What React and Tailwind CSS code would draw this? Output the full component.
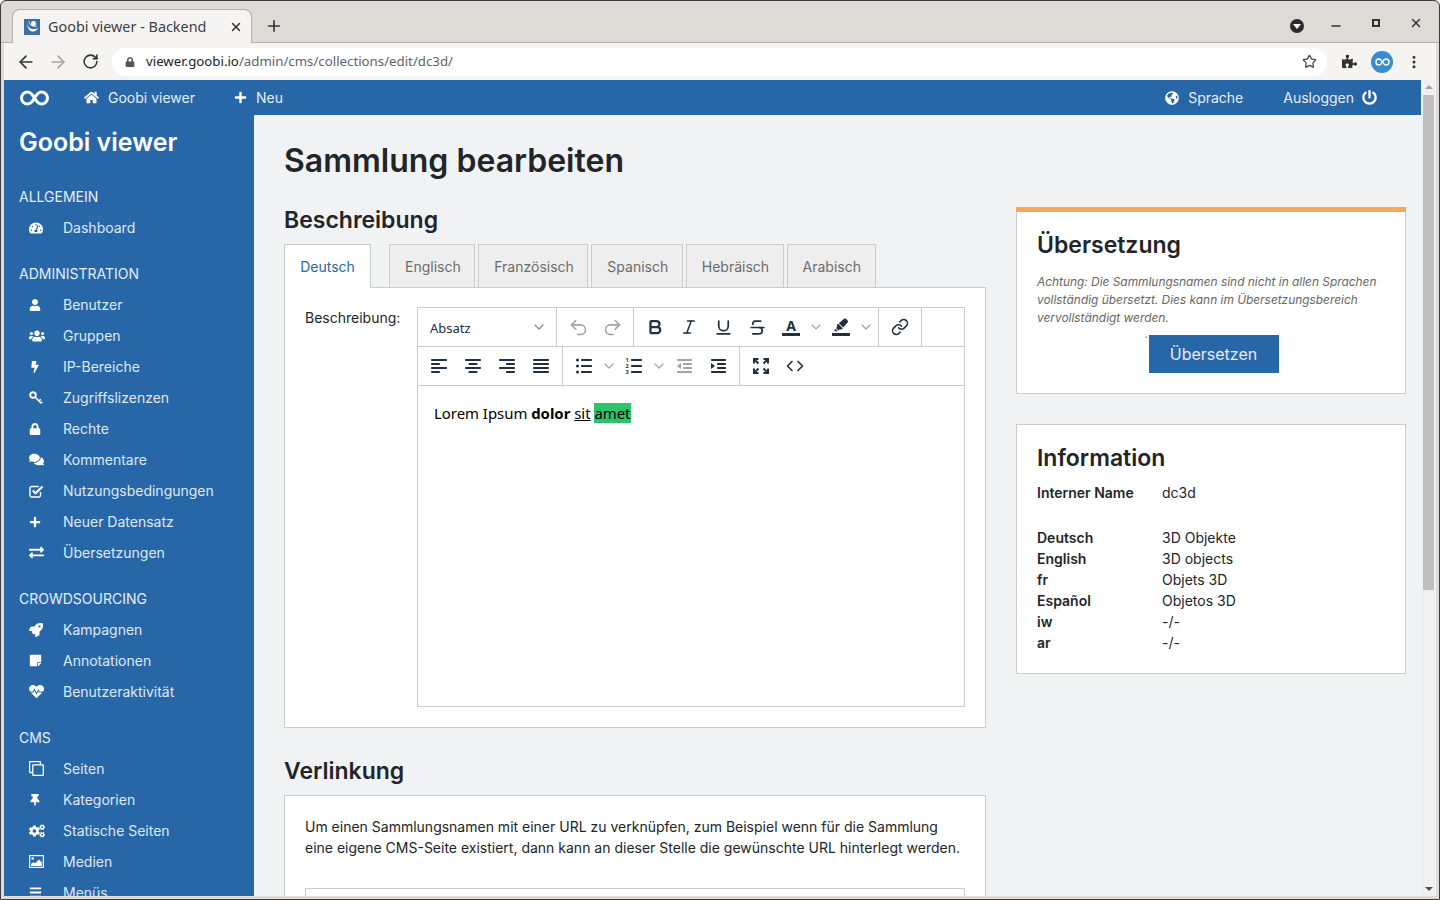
import {
  ArrowLeft, ArrowRight, RotateCw, Star, MoreVertical, X, Plus, Minus, Undo2, Redo2, Bold, Italic,
  Underline, Strikethrough, Link, Code, ChevronDown,
} from "lucide-react";
import {
  FaHome, FaPlus, FaGlobeAmericas, FaPowerOff, FaTachometerAlt, FaUser, FaUsers, FaBolt, FaLock,
  FaComments, FaExchangeAlt, FaRocket, FaStickyNote, FaHeartbeat, FaThumbtack,
  FaCogs, FaBars, FaPuzzlePiece, FaHighlighter,
} from "react-icons/fa";

function KeyIcon() {
  return (
    <svg viewBox="0 0 14 14" fill="none" stroke="currentColor" className="h-[14px] w-[14px]">
      <circle cx="4" cy="4" r="2.800" strokeWidth="1.900" />
      <path d="M6 6l6.500 6.500M10 10l1.800-1.800M12 12l1.200-1.200" strokeWidth="1.600" />
    </svg>
  );
}

function CheckBoxIcon() {
  return (
    <svg viewBox="0 0 15 14" fill="none" stroke="currentColor" className="h-[14px] w-[15px]">
      <path d="M11.500 8v3.200a1.800 1.800 0 0 1-1.800 1.800H2.800A1.800 1.800 0 0 1 1 11.200V4.300a1.800 1.800 0 0 1 1.800-1.800h7" strokeWidth="1.400" />
      <path d="M3.800 6.500l2.700 2.700L13.500 2.500" strokeWidth="2.200" />
    </svg>
  );
}

function PagesIcon() {
  return (
    <svg viewBox="0 0 15 15" fill="none" stroke="currentColor" strokeWidth="1.300" className="h-[15px] w-[15px]">
      <path d="M3.500 11.500H1.200a.6.6 0 0 1-.6-.6V1.200a.6.6 0 0 1 .6-.6h9.600a.6.6 0 0 1 .6.6v2.300" />
      <rect x="3.800" y="3.800" width="10.500" height="10.500" rx="0.600" />
    </svg>
  );
}

function PictureIcon() {
  return (
    <svg viewBox="0 0 15 13" className="h-[13px] w-[15px]">
      <rect x="0.600" y="0.600" width="13.800" height="11.800" fill="none" stroke="currentColor" strokeWidth="1.200" />
      <circle cx="3.700" cy="3.500" r="1.300" fill="currentColor" />
      <path d="M2 11V9l2.500-2 1.500 1.200L10 4.500 13 7.500V11z" fill="currentColor" />
    </svg>
  );
}

const sections = [
  { title: "ALLGEMEIN", items: [["Dashboard", FaTachometerAlt]] },
  {
    title: "ADMINISTRATION",
    items: [
      ["Benutzer", FaUser, 12],
      ["Gruppen", FaUsers, 16],
      ["IP-Bereiche", FaBolt, 12],
      ["Zugriffslizenzen", KeyIcon],
      ["Rechte", FaLock, 12],
      ["Kommentare", FaComments, 15],
      ["Nutzungsbedingungen", CheckBoxIcon],
      ["Neuer Datensatz", FaPlus, 12],
      ["Übersetzungen", FaExchangeAlt, 15],
    ],
  },
  {
    title: "CROWDSOURCING",
    items: [
      ["Kampagnen", FaRocket],
      ["Annotationen", FaStickyNote, 13],
      ["Benutzeraktivität", FaHeartbeat, 15],
    ],
  },
  {
    title: "CMS",
    items: [
      ["Seiten", PagesIcon],
      ["Kategorien", FaThumbtack, 12],
      ["Statische Seiten", FaCogs, 16],
      ["Medien", PictureIcon],
      ["Menüs", FaBars, 13],
    ],
  },
];

const tabs = ["Englisch", "Französisch", "Spanisch", "Hebräisch", "Arabisch"];

const info = [
  ["Deutsch", "3D Objekte"],
  ["English", "3D objects"],
  ["fr", "Objets 3D"],
  ["Español", "Objetos 3D"],
  ["iw", "-/-"],
  ["ar", "-/-"],
];

function InfinityLogo({ className }) {
  return (
    <svg viewBox="0 0 30 16" fill="none" stroke="currentColor" strokeWidth="3" className={className}>
      <path d="M15 8c-2-3.500-4-6-7-6a6 6 0 0 0 0 12c3 0 5-2.500 7-6s4-6 7-6a6 6 0 0 1 0 12c-3 0-5-2.500-7-6z" />
    </svg>
  );
}

function Favicon() {
  return (
    <svg viewBox="0 0 16 16" className="h-4 w-4 shrink-0">
      <rect width="16" height="16" fill="#3d6fa5" />
      <circle cx="9.500" cy="4.500" r="2.500" fill="#fff" />
      <path d="M3 3c0 6 5 9 11 6-2 5-11 6-11-6z" fill="#fff" />
      <path d="M5 2c0 4 3 6 8 5" stroke="#fff" fill="none" strokeWidth="0.8" />
    </svg>
  );
}

function Lines({ rows }) {
  return (
    <svg viewBox="0 0 24 24" fill="currentColor" className="h-6 w-6">
      {rows.map(([x, y, w], i) => (
        <rect key={i} x={x} y={y} width={w} height="2" rx="0.8" />
      ))}
    </svg>
  );
}

const alignLeft = [[4, 5, 16], [4, 9, 9], [4, 13, 16], [4, 17, 9]];
const alignCenter = [[4, 5, 16], [7.5, 9, 9], [4, 13, 16], [7.5, 17, 9]];
const alignRight = [[4, 5, 16], [11, 9, 9], [4, 13, 16], [11, 17, 9]];
const alignJustify = [[4, 5, 16], [4, 9, 16], [4, 13, 16], [4, 17, 16]];

function BulletList() {
  return (
    <svg viewBox="0 0 24 24" fill="currentColor" className="h-6 w-6">
      <circle cx="5.500" cy="6" r="1.500" />
      <circle cx="5.500" cy="12" r="1.500" />
      <circle cx="5.500" cy="18" r="1.500" />
      <rect x="9" y="5" width="11" height="2" rx="0.8" />
      <rect x="9" y="11" width="11" height="2" rx="0.8" />
      <rect x="9" y="17" width="11" height="2" rx="0.8" />
    </svg>
  );
}

function NumberList() {
  return (
    <svg viewBox="0 0 24 24" fill="currentColor" className="h-6 w-6">
      <text x="3.500" y="8" fontSize="5.500" fontWeight="700">1</text>
      <text x="3.500" y="14" fontSize="5.500" fontWeight="700">2</text>
      <text x="3.500" y="20" fontSize="5.500" fontWeight="700">3</text>
      <rect x="9" y="5" width="11" height="2" rx="0.8" />
      <rect x="9" y="11" width="11" height="2" rx="0.8" />
      <rect x="9" y="17" width="11" height="2" rx="0.8" />
    </svg>
  );
}

function Indent({ flip }) {
  return (
    <svg viewBox="0 0 24 24" fill="currentColor" className="h-6 w-6">
      <rect x="5" y="5" width="15" height="2" rx="0.8" />
      <rect x="11" y="9" width="9" height="2" rx="0.8" />
      <rect x="11" y="13" width="9" height="2" rx="0.8" />
      <rect x="5" y="17" width="15" height="2" rx="0.8" />
      {flip ? <path d="M9 9v6l-4-3z" /> : <path d="M5 9v6l4-3z" />}
    </svg>
  );
}

function Fullscreen() {
  return (
    <svg viewBox="0 0 24 24" fill="none" stroke="currentColor" strokeWidth="2" className="h-6 w-6">
      <path d="M9.500 5H5v4.500M5.500 5.500l4 4M14.500 5H19v4.500M18.500 5.500l-4 4M9.500 19H5v-4.500M5.500 18.500l4-4M14.500 19H19v-4.500M18.500 18.500l-4-4" />
    </svg>
  );
}

function Btn({ children, muted }) {
  return (
    <div className={`flex h-[38px] w-[34px] items-center justify-center ${muted ? "text-[#9ea4ac]" : "text-[#222f3e]"}`}>
      {children}
    </div>
  );
}

function Chev() {
  return (
    <div className="flex h-[38px] w-4 items-center justify-center text-[#9ea4ac]">
      <ChevronDown size={16} strokeWidth={1.8} />
    </div>
  );
}

function Group({ children, last }) {
  return <div className={`flex px-1 ${last ? "" : "border-r border-[#ccc]"}`}>{children}</div>;
}

function Editor() {
  const icon = { size: 19, strokeWidth: 2.2 };
  return (
    <div className="flex h-[400px] w-[548px] flex-col border border-[#ccc] bg-white font-['Noto_Sans',sans-serif]">
      <div className="flex h-[39px] border-b border-[#ccc]">
        <div className="flex w-[139px] items-center justify-between border-r border-[#ccc] pl-3 pr-[9px] text-[13px] text-[#222f3e]">
          <span className="pt-[3px]">Absatz</span>
          <ChevronDown size={16} strokeWidth={1.8} className="text-[#7f8a96]" />
        </div>
        <Group>
          <Btn muted><Undo2 size={21} strokeWidth={1.8} /></Btn>
          <Btn muted><Redo2 size={21} strokeWidth={1.8} /></Btn>
        </Group>
        <Group>
          <Btn><Bold size={18} strokeWidth={3} /></Btn>
          <Btn><Italic size={18} strokeWidth={2} /></Btn>
          <Btn><Underline {...icon} /></Btn>
          <Btn><Strikethrough {...icon} /></Btn>
          <Btn>
            <span className="flex flex-col items-center text-[14px] font-bold leading-[15px]">
              A
              <span className="h-[3px] w-[18px] bg-[#222f3e]" />
            </span>
          </Btn>
          <Chev />
          <Btn>
            <span className="flex flex-col items-center">
              <FaHighlighter size={14} />
              <span className="mt-px h-[3px] w-[18px] bg-[#222f3e]" />
            </span>
          </Btn>
          <Chev />
        </Group>
        <Group>
          <Btn><Link size={18} strokeWidth={2} /></Btn>
        </Group>
      </div>
      <div className="flex h-[39px] border-b border-[#ccc]">
        <Group>
          <Btn><Lines rows={alignLeft} /></Btn>
          <Btn><Lines rows={alignCenter} /></Btn>
          <Btn><Lines rows={alignRight} /></Btn>
          <Btn><Lines rows={alignJustify} /></Btn>
        </Group>
        <Group>
          <Btn><BulletList /></Btn>
          <Chev />
          <Btn><NumberList /></Btn>
          <Chev />
          <Btn muted><Indent flip /></Btn>
          <Btn><Indent /></Btn>
        </Group>
        <Group last>
          <Btn><Fullscreen /></Btn>
          <Btn><Code size={18} strokeWidth={2.2} /></Btn>
        </Group>
      </div>
      <p className="px-4 pt-[17px] text-[14.9px] leading-[21px] text-black">
        Lorem Ipsum <strong>dolor</strong> <u>sit</u> <span className="bg-[#2dc26b]">amet</span>
      </p>
    </div>
  );
}

export default function App() {
  return (
    <div className="flex h-screen w-screen flex-col overflow-hidden rounded-t-[6px] border border-[#3c3c3c] bg-[#dedbd7] font-['Inter',sans-serif] text-[#212529]">
      {/* browser tab strip */}
      <div className="flex h-[42px] shrink-0 border-b border-[#b5b2ae] pl-[11px] pt-2 font-['Noto_Sans',sans-serif]">
        <div className="flex h-[34px] w-[240px] items-center rounded-t-lg border border-b-0 border-[#b5b2ae] bg-[#f5f4f3] pl-[11px] pr-2 text-[14.4px] text-[#3c4043]">
          <Favicon />
          <span className="ml-2 flex-1">Goobi viewer - Backend</span>
          <X size={14} strokeWidth={2.5} className="text-[#333]" />
        </div>
        <Plus size={18} strokeWidth={2.2} className="ml-[13px] mt-2 text-[#333]" />
        <div className="ml-auto flex h-[32px] items-center pr-[16px] text-[#333]">
          <span className="mt-[2px] flex h-[14px] w-[14px] items-center justify-center rounded-full bg-[#2c2c2c]">
            <span className="h-0 w-0 border-x-[4px] border-t-[5px] border-x-transparent border-t-white" />
          </span>
          <Minus size={14} strokeWidth={2.5} className="ml-[25px] mt-[1px]" />
          <span className="ml-[29px] -mt-[4px] h-2 w-2 border-2 border-[#333]" />
          <X size={14} strokeWidth={2.5} className="ml-[29px] -mt-[4px]" />
        </div>
      </div>
      {/* browser toolbar */}
      <div className="mx-[3px] flex h-[37px] shrink-0 items-center bg-[#f5f4f3] font-['Noto_Sans',sans-serif]">
        <ArrowLeft size={20} strokeWidth={2} className="ml-[12px] text-[#333]" />
        <ArrowRight size={20} strokeWidth={2} className="ml-[12px] text-[#a5a5a5]" />
        <RotateCw size={17} strokeWidth={2.2} className="ml-[14px] text-[#333]" />
        <div className="ml-[13px] flex h-7 w-[1215px] items-center rounded-full bg-white pl-[13px] pr-[10px]">
          <FaLock size={10} className="text-[#555]" />
          <span className="ml-[11px] flex-1 text-[13.25px] text-[#5f6368]">
            <span className="text-[#202124]">viewer.goobi.io</span>/admin/cms/collections/edit/dc3d/
          </span>
          <Star size={15} strokeWidth={2} className="text-[#444]" />
        </div>
        <FaPuzzlePiece size={15} className="ml-[15px] text-[#333]" />
        <span className="ml-[14px] flex h-[22px] w-[22px] items-center justify-center rounded-full bg-[#3a8ccc] text-white">
          <InfinityLogo className="h-2 w-[15px]" />
        </span>
        <MoreVertical size={16} strokeWidth={2.5} className="ml-[13px] text-[#333]" />
      </div>

      {/* page viewport */}
      <div className="mx-[3px] mb-[3px] flex min-h-0 flex-1">
        <div className="flex min-w-0 flex-1 flex-col">
          <nav className="flex h-[35px] shrink-0 items-center bg-[#2867a7] text-[14px] text-[#e6edf5]">
            <InfinityLogo className="ml-[15px] h-[16px] w-[31px] text-white" />
            <FaHome size={15} className="ml-[34px] text-white" />
            <span className="ml-[9px]">Goobi viewer</span>
            <FaPlus size={13} className="ml-[39px] text-white" />
            <span className="ml-[9px]">Neu</span>
            <FaGlobeAmericas size={14} className="ml-auto text-white" />
            <span className="ml-[9px]">Sprache</span>
            <span className="ml-[40px]">Ausloggen</span>
            <FaPowerOff size={15} className="ml-[8px] mr-[44px] text-white" />
          </nav>
          <div className="flex min-h-0 flex-1">
            <aside className="w-[250px] shrink-0 overflow-hidden bg-[#2867a7] pl-[15px] text-[#dfe8f2]">
              <h2 className="mb-[21px] mt-[10px] text-[25px] font-semibold leading-[35px] text-white">Goobi viewer</h2>
              {sections.map((section) => (
                <div key={section.title} className="mb-[15px]">
                  <div className="text-[14px] leading-[31px] text-[#e6edf5]">{section.title}</div>
                  {section.items.map(([label, Icon, size]) => (
                    <div key={label} className="flex h-[31px] items-center text-[14px]">
                      <span className="flex w-[44px] shrink-0 pl-[10px] text-white">
                        <Icon size={size ?? 14} />
                      </span>
                      {label}
                    </div>
                  ))}
                </div>
              ))}
            </aside>

            <main className="min-w-0 flex-1 overflow-hidden bg-[#f1f2f4] pl-[30px] pr-[15px]">
              <h1 className="mt-[24px] text-[32px] font-semibold leading-[44px]">Sammlung bearbeiten</h1>
              <div className="mt-[20px] flex gap-[30px]">
                <div className="w-[702px] shrink-0">
                  <h2 className="text-[23px] font-semibold leading-[34px]">Beschreibung</h2>
                  <div className="relative z-10 mt-[7px] flex h-[43px] gap-[3px] text-[14px]">
                    <div className="mr-[15px] flex h-[44px] w-[87px] items-center justify-center border border-b-0 border-[#ccc] bg-white text-[#2867a7]">
                      Deutsch
                    </div>
                    {tabs.map((tab) => (
                      <div key={tab} className="flex h-[43px] items-center border border-b-0 border-[#ccc] bg-[#eee] pl-[15px] pr-[13.5px] text-[#6c6c6c]">
                        {tab}
                      </div>
                    ))}
                  </div>
                  <section className="flex h-[441px] border border-[#ccc] bg-white pl-5 pt-[19px]">
                    <label className="w-[112px] shrink-0 text-[14px] leading-[21px]">Beschreibung:</label>
                    <Editor />
                  </section>
                  <h2 className="mt-[26px] text-[23px] font-semibold leading-[34px]">Verlinkung</h2>
                  <section className="mt-[7px] h-[200px] border border-[#ccc] bg-white px-5 pt-5">
                    <p className="text-[14px] leading-[21px]">
                      Um einen Sammlungsnamen mit einer URL zu verknüpfen, zum Beispiel wenn für die Sammlung eine eigene CMS-Seite existiert, dann kann an dieser Stelle die gewünschte URL hinterlegt werden.
                    </p>
                    <div className="mt-[30px] h-10 border border-[#ccc]" />
                  </section>
                </div>

                <div className="w-[390px] shrink-0 pt-[4px]">
                  <section className="h-[187px] border border-t-0 border-[#ccc] bg-white">
                    <div className="-mx-px h-[5px] bg-[#f5ab55]" />
                    <div className="px-5 pt-[16px]">
                      <h3 className="text-[23px] font-semibold leading-[34px]">Übersetzung</h3>
                      <p className="mt-[11px] text-[11.9px] italic leading-[18px] text-[#666]">
                        Achtung: Die Sammlungsnamen sind nicht in allen Sprachen vollständig übersetzt. Dies kann im Übersetzungsbereich vervollständigt werden.
                      </p>
                      <div className="mt-2 flex justify-center pl-[5px]">
                        <div className="relative flex h-[38px] w-[130px] items-center justify-center bg-[#2867a7] text-[16px] text-[#e6edf5]">
                          Übersetzen
                          <span className="absolute -left-[4px] top-0 text-[10px] leading-[10px] text-[#333]">´</span>
                        </div>
                      </div>
                    </div>
                  </section>
                  <section className="mt-[30px] h-[250px] border border-[#ccc] bg-white px-5 pt-[16px]">
                    <h3 className="text-[23px] font-semibold leading-[34px]">Information</h3>
                    <div className="mt-[7px] flex text-[14px] leading-[21px]">
                      <span className="w-[125px] font-semibold">Interner Name</span>
                      <span>dc3d</span>
                    </div>
                    <div className="mt-[24px]">
                      {info.map(([lang, value]) => (
                        <div key={lang} className="flex text-[14px] leading-[21px]">
                          <span className="w-[125px] font-semibold">{lang}</span>
                          <span>{value}</span>
                        </div>
                      ))}
                    </div>
                  </section>
                </div>
              </div>
            </main>
          </div>
        </div>

        {/* page scrollbar */}
        <div className="flex w-[15px] shrink-0 flex-col items-center bg-[#f0f0f0]">
          <span className="mt-[5px] h-0 w-0 border-x-[4px] border-b-[4px] border-x-transparent border-b-[#a3a3a3]" />
          <div className="mt-[6px] h-[495px] w-[11px] bg-[#bfbfbf]" />
          <span className="mb-[5px] mt-auto h-0 w-0 border-x-[4px] border-t-[4px] border-x-transparent border-t-[#505050]" />
        </div>
      </div>
    </div>
  );
}
